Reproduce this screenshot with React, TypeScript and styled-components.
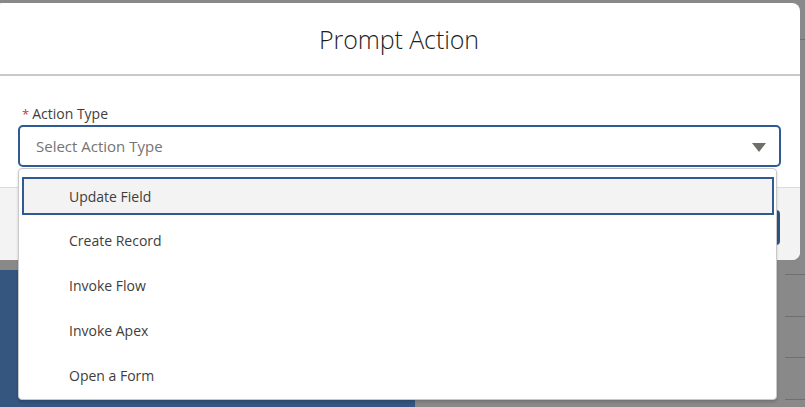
import React from "react";
import styled, { createGlobalStyle } from "styled-components";

const Global = createGlobalStyle`
  html, body { margin: 0; padding: 0; }
  body { font-family: "Open Sans", "Noto Sans", Arial, sans-serif; background: #898989; }
  * { box-sizing: border-box; }
`;

const Page = styled.div`
  position: relative;
  width: 805px;
  height: 407px;
  overflow: hidden;
  background: #898989;
  display: grid;
  grid-template-columns: 415px 1fr;
  grid-template-rows: 270px 1fr;
`;

const BackTop = styled.div`
  grid-column: 1 / 3;
  background: #898989;
  display: flex;
  flex-direction: column;
  align-items: flex-end;
  padding-top: 39px;
`;

const BackBlue = styled.div`
  background: #34567f;
`;

const BackRight = styled.div`
  background: #898989;
  display: flex;
  flex-direction: column;
  align-items: flex-end;
  padding-top: 4px;
  gap: 40.5px;
`;

const BackLine = styled.div`
  width: 20px;
  height: 1px;
  background: #6f6f6f;
`;

const Modal = styled.div`
  position: absolute;
  left: -6px;
  top: 3px;
  width: 806px;
  height: 257px;
  background: #fff;
  border-radius: 8px;
  display: flex;
  flex-direction: column;
  overflow: hidden;
`;

const Header = styled.div`
  height: 73px;
  border-bottom: 2px solid #c9c9c9;
  display: flex;
  align-items: center;
  justify-content: center;
  padding-left: 4px;
`;

const Title = styled.h2`
  margin: 0;
  font-size: 25px;
  font-weight: 300;
  color: #1e1e1e;
  letter-spacing: -0.1px;
`;

const Body = styled.div`
  padding: 28px 0 0 24px;
  height: 111px;
`;

const Label = styled.div`
  font-size: 14px;
  color: #3e3e3c;
  line-height: 20px;
  display: flex;
  align-items: baseline;
  gap: 3px;
  padding-left: 4px;
`;

const Required = styled.span`
  color: #c23934;
  font-size: 13px;
`;

const Combo = styled.div`
  margin-top: 1px;
  width: 763px;
  height: 42px;
  border: 2px solid #2f5a94;
  border-radius: 5px;
  display: flex;
  align-items: center;
  justify-content: space-between;
  padding: 0 13px 0 16px;
`;

const Placeholder = styled.span`
  font-size: 15px;
  color: #747474;
`;

const Caret = styled.svg`
  width: 14px;
  height: 9px;
  margin-top: 3px;
`;

const Footer = styled.div`
  flex: 1;
  background: #f3f3f3;
  border-top: 1px solid #dddbda;
  display: flex;
  justify-content: flex-end;
  align-items: center;
  padding: 0 20px 0 0;
`;

const FooterButton = styled.div`
  width: 80px;
  height: 35px;
  margin-top: 6px;
  background: #2c5585;
  border-radius: 4px;
`;

const Menu = styled.ul`
  position: absolute;
  left: 18px;
  top: 168px;
  width: 759px;
  height: 232px;
  margin: 0;
  list-style: none;
  background: #fff;
  border: 1px solid #c9c9c9;
  border-radius: 4px;
  box-shadow: 0 2px 3px rgba(0, 0, 0, 0.16);
  padding: 8px 2px 0 3px;
  display: flex;
  flex-direction: column;
  gap: 6.75px;
`;

const Item = styled.li<{ $active?: boolean }>`
  height: 38px;
  display: flex;
  align-items: center;
  padding-left: 45px;
  font-size: 14px;
  color: #3e3e3c;
  background: ${(p) => (p.$active ? "#f3f3f3" : "transparent")};
  border: 2px solid ${(p) => (p.$active ? "#2f5a94" : "transparent")};
`;

const options = ["Update Field", "Create Record", "Invoke Flow", "Invoke Apex", "Open a Form"];

export default function App() {
  return (
    <>
      <Global />
      <Page>
        <BackTop>
          <BackLine />
        </BackTop>
        <BackBlue />
        <BackRight>
          <BackLine />
          <BackLine />
          <BackLine />
          <BackLine />
        </BackRight>
        <Modal>
          <Header>
            <Title>Prompt Action</Title>
          </Header>
          <Body>
            <Label>
              <Required>*</Required>
              Action Type
            </Label>
            <Combo>
              <Placeholder>Select Action Type</Placeholder>
              <Caret viewBox="0 0 14 9">
                <path d="M0 0 H14 L7 9 Z" fill="#706e6b" />
              </Caret>
            </Combo>
          </Body>
          <Footer>
            <FooterButton />
          </Footer>
        </Modal>
        <Menu>
          {options.map((o, i) => (
            <Item key={o} $active={i === 0}>
              {o}
            </Item>
          ))}
        </Menu>
      </Page>
    </>
  );
}
